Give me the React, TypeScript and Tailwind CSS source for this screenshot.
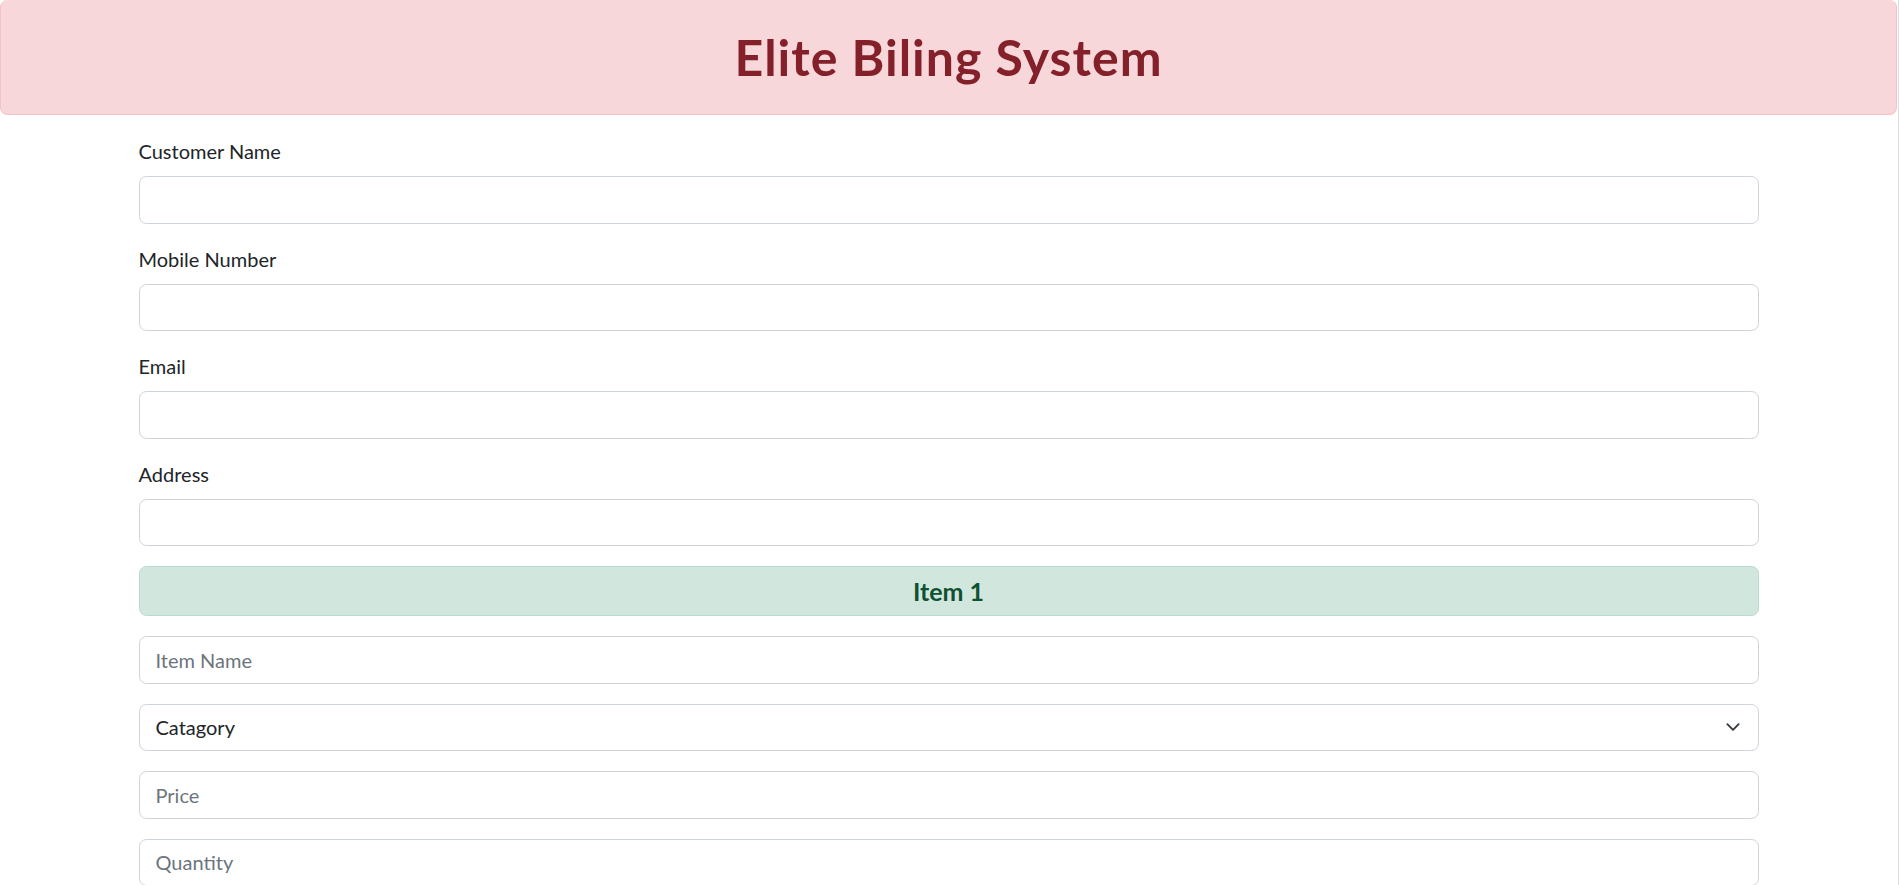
import React from "react";

function Field({ label }: { label: string }) {
  return (
    <div className="mb-[20px]">
      <label className="block text-[20px] leading-[30px] mb-[10px] text-[#212529]">{label}</label>
      <input
        type="text"
        className="block w-full h-[47.5px] px-[16px] text-[20px] text-[#212529] bg-white border border-[#ced4da] rounded-[7.5px] outline-none"
      />
    </div>
  );
}

function PlainInput({ placeholder }: { placeholder: string }) {
  return (
    <input
      type="text"
      placeholder={placeholder}
      className="block w-full h-[47.5px] mb-[20px] px-[16px] text-[20px] text-[#212529] bg-white border border-[#ced4da] rounded-[7.5px] outline-none placeholder:text-[#6c757d]"
    />
  );
}

export default function App() {
  return (
    <div className="min-h-screen bg-white font-['Lato',sans-serif] pr-px border-r border-[#dedede]">
      <div className="h-[115px] flex items-center justify-center bg-[#f8d7da] border border-t-0 border-[#f5c2c7] rounded-[7.5px]">
        <h1 className="text-[50px] leading-[60px] font-bold tracking-[1px] text-[#842029]">Elite Biling System</h1>
      </div>
      <div className="w-[1620px] mx-auto pt-[21px]">
        <Field label="Customer Name" />
        <Field label="Mobile Number" />
        <Field label="Email" />
        <Field label="Address" />
        <div className="h-[50px] mb-[20px] flex items-center justify-center bg-[#d1e7dd] border border-[#badbcc] rounded-[7.5px]">
          <span className="text-[25px] leading-[30px] font-bold text-[#0f5132]">Item 1</span>
        </div>
        <PlainInput placeholder="Item Name" />
        <div className="relative mb-[20px]">
          <select
            defaultValue=""
            className="block w-full h-[47.5px] pl-[16px] pr-[50px] text-[20px] text-[#212529] bg-white border border-[#ced4da] rounded-[7.5px] outline-none appearance-none"
          >
            <option value="">Catagory</option>
            <option value="1">Grocery</option>
            <option value="2">Electronics</option>
          </select>
          <svg
            className="absolute right-[16px] top-1/2 -translate-y-1/2 pointer-events-none"
            width="20"
            height="15"
            viewBox="0 0 16 16"
            preserveAspectRatio="xMidYMid meet"
          >
            <path d="m2 5 6 6 6-6" fill="none" stroke="#343a40" strokeWidth="2" strokeLinecap="round" strokeLinejoin="round" />
          </svg>
        </div>
        <PlainInput placeholder="Price" />
        <PlainInput placeholder="Quantity" />
      </div>
    </div>
  );
}
